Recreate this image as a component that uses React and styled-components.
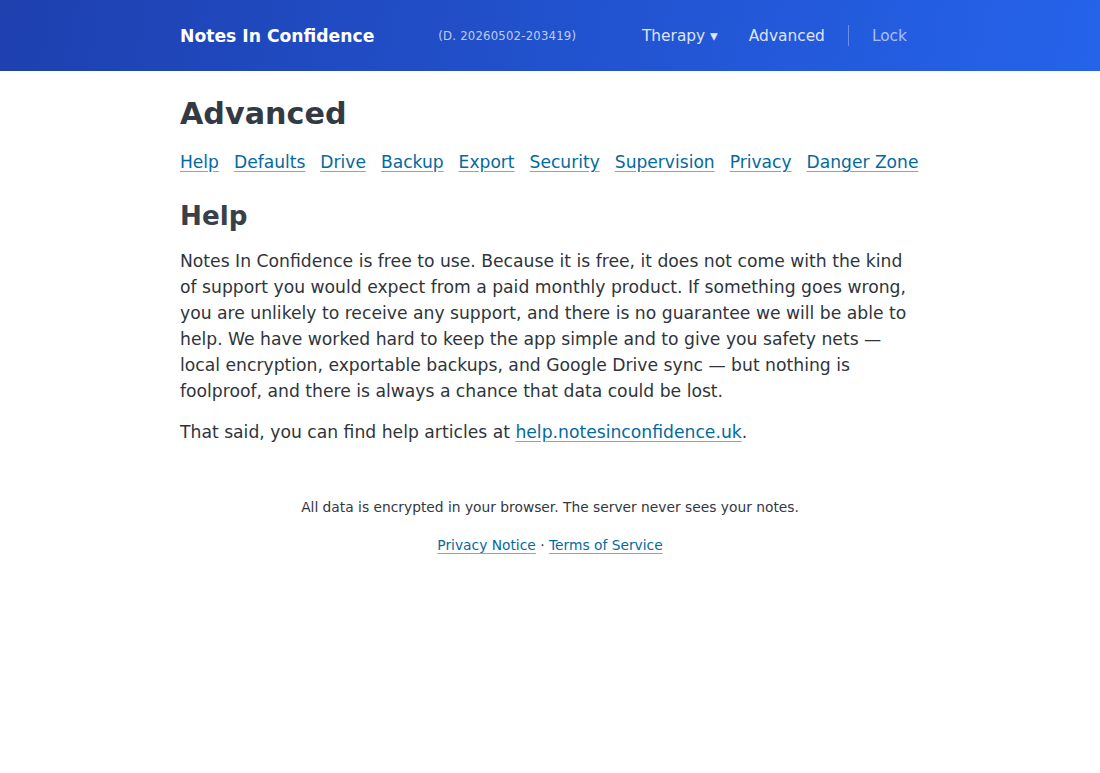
import React from "react";
import styled, { createGlobalStyle } from "styled-components";

const GlobalStyle = createGlobalStyle`
  html, body {
    margin: 0;
    padding: 0;
    background: #ffffff;
    font-family: "DejaVu Sans", sans-serif;
    color: #2f343b;
  }
`;

const Header = styled.header`
  height: 71px;
  background: linear-gradient(100deg, #1e40af 0%, #2563eb 100%);
  color: #ffffff;
`;

const HeaderInner = styled.div`
  max-width: 740px;
  height: 100%;
  margin: 0 auto;
  display: flex;
  align-items: center;
`;

const Brand = styled.a`
  font-size: 17.2px;
  font-weight: 700;
  color: #ffffff;
  text-decoration: none;
`;

const Version = styled.span`
  margin-left: 64px;
  font-size: 11.7px;
  color: rgba(255, 255, 255, 0.72);
  letter-spacing: 0.2px;
`;

const Nav = styled.nav`
  margin-left: auto;
  display: flex;
  align-items: center;
  padding-right: 13px;
`;

const NavLink = styled.a`
  font-size: 15.4px;
  color: ${(p) => (p.$muted ? "rgba(255,255,255,0.62)" : "rgba(255,255,255,0.86)")};
  text-decoration: none;
  margin-left: ${(p) => p.$gap || 0}px;
`;

const Divider = styled.span`
  width: 1px;
  height: 21px;
  background: rgba(255, 255, 255, 0.32);
  margin: 0 23px;
`;

const Main = styled.main`
  max-width: 740px;
  margin: 0 auto;
  padding-top: 24px;
`;

const Title = styled.h1`
  margin: 0;
  font-size: 30.2px;
  font-weight: 700;
  line-height: 38px;
  color: #343a43;
`;

const Tabs = styled.div`
  display: flex;
  flex-wrap: wrap;
  gap: 15px;
  margin-top: 17px;
`;

const Link = styled.a`
  color: #0369a1;
  text-decoration: underline;
  text-decoration-color: rgba(3, 105, 161, 0.55);
  text-underline-offset: 3px;
  cursor: pointer;
`;

const TabLink = styled(Link)`
  font-size: 17.1px;
  line-height: 24px;
`;

const Section = styled.section`
  margin-top: 25px;
`;

const SectionTitle = styled.h2`
  margin: 0;
  font-size: 26.2px;
  font-weight: 700;
  line-height: 34px;
  color: #3a404a;
`;

const Para = styled.p`
  margin: 15px 0 0;
  font-size: 17.2px;
  line-height: 26px;
  color: #2f343b;
`;

const Footer = styled.footer`
  margin-top: 52px;
  text-align: center;
  font-size: 13.8px;
  color: #33383f;
`;

const FooterLine = styled.p`
  margin: 0 0 ${(p) => p.$mb || 0}px;
  line-height: 20px;
`;

export default function App() {
  const tabs = [
    "Help",
    "Defaults",
    "Drive",
    "Backup",
    "Export",
    "Security",
    "Supervision",
    "Privacy",
    "Danger Zone",
  ];
  return (
    <>
      <GlobalStyle />
      <Header>
        <HeaderInner>
          <Brand>Notes In Confidence</Brand>
          <Version>(D. 20260502-203419)</Version>
          <Nav>
            <NavLink>Therapy ▾</NavLink>
            <NavLink $gap={31}>Advanced</NavLink>
            <Divider />
            <NavLink $muted>Lock</NavLink>
          </Nav>
        </HeaderInner>
      </Header>
      <Main>
        <Title>Advanced</Title>
        <Tabs>
          {tabs.map((t) => (
            <TabLink key={t}>{t}</TabLink>
          ))}
        </Tabs>
        <Section>
          <SectionTitle>Help</SectionTitle>
          <Para>
            Notes In Confidence is free to use. Because it is free, it does not
            come with the kind of support you would expect from a paid monthly
            product. If something goes wrong, you are unlikely to receive any
            support, and there is no guarantee we will be able to help. We have
            worked hard to keep the app simple and to give you safety nets —
            local encryption, exportable backups, and Google Drive sync — but
            nothing is foolproof, and there is always a chance that data could
            be lost.
          </Para>
          <Para>
            That said, you can find help articles at{" "}
            <Link>help.notesinconfidence.uk</Link>.
          </Para>
        </Section>
        <Footer>
          <FooterLine $mb={18}>
            All data is encrypted in your browser. The server never sees your
            notes.
          </FooterLine>
          <FooterLine>
            <Link>Privacy Notice</Link> · <Link>Terms of Service</Link>
          </FooterLine>
        </Footer>
      </Main>
    </>
  );
}
